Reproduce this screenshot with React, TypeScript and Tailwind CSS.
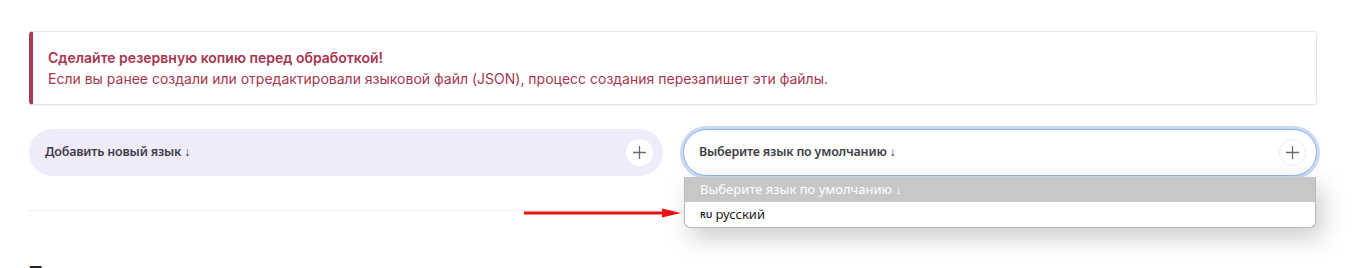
import React from "react";

const PlusButton: React.FC<{ bordered?: boolean }> = ({ bordered }) => (
  <span
    className={
      "flex h-[27px] w-[27px] items-center justify-center rounded-full bg-white " +
      (bordered ? "border border-[#ececec]" : "")
    }
  >
    <svg width="15" height="15" viewBox="0 0 15 15" fill="none">
      <path d="M7.5 1v13M1 7.5h13" stroke="#6b6b6b" strokeWidth="1.3" />
    </svg>
  </span>
);

const App: React.FC = () => {
  return (
    <div className="min-h-[268px] bg-white pl-[29px] pt-[31px] font-['Inter',sans-serif]">
      <div className="w-[1288px]">
        <div className="rounded-[4px] border border-l-4 border-[#e6e6e6] border-l-[#a83b56] px-[15px] py-[15px] text-[14px] leading-[21px] text-[#a8364f] shadow-[0_1px_2px_rgba(0,0,0,0.05)]">
          <p className="font-semibold">Сделайте резервную копию перед обработкой!</p>
          <p>
            Если вы ранее создали или отредактировали языковой файл (JSON), процесс создания перезапишет эти файлы.
          </p>
        </div>

        <div className="relative mt-[24px] grid grid-cols-2 gap-5 font-['Noto_Sans',sans-serif]">
          <div className="flex h-[47px] items-center justify-between rounded-full bg-[#efebfb] pl-[16px] pr-[10px]">
            <span className="text-[12.5px] font-semibold tracking-[-0.2px] text-[#3e3e48]">Добавить новый язык ↓</span>
            <PlusButton />
          </div>

          <div className="relative">
            <div className="flex h-[47px] items-center justify-between rounded-full border border-[#8fb2e6] bg-white pl-[15px] pr-[10px] ring-[3px] ring-[#c6daf4]">
              <span className="text-[12.5px] font-semibold tracking-[-0.2px] text-[#3e3e48]">Выберите язык по умолчанию ↓</span>
              <PlusButton bordered />
            </div>
            <div className="absolute left-px right-px top-[48px] z-10 overflow-hidden rounded-b-[6px] border border-t-0 border-[#b9b9b9] bg-white text-[13px] shadow-[6px_10px_24px_rgba(0,0,0,0.2)]">
              <div className="flex h-[25px] items-center bg-[#c7c7c7] pl-[15px] text-white">Выберите язык по умолчанию ↓</div>
              <div className="flex h-[25px] items-center pl-[15px] text-[#1a1a1a]">
                <span className="mr-[3px] text-[9px] font-semibold">RU</span>
                <span>русский</span>
              </div>
            </div>
          </div>

          <svg
            className="absolute left-[495px] top-[79px]"
            width="158"
            height="10"
            viewBox="0 0 158 10"
          >
            <path d="M0 5h142" stroke="#ee1111" strokeWidth="3" />
            <path d="M138 0.5L157 5L138 9.5Z" fill="#ee1111" />
          </svg>
        </div>

        <div className="mt-[34px] border-t border-[#efefef]" />

        <h2 className="mt-[49px] text-[20px] font-semibold leading-[28px] text-[#222]">Текущие языки</h2>
      </div>
    </div>
  );
};

export default App;
